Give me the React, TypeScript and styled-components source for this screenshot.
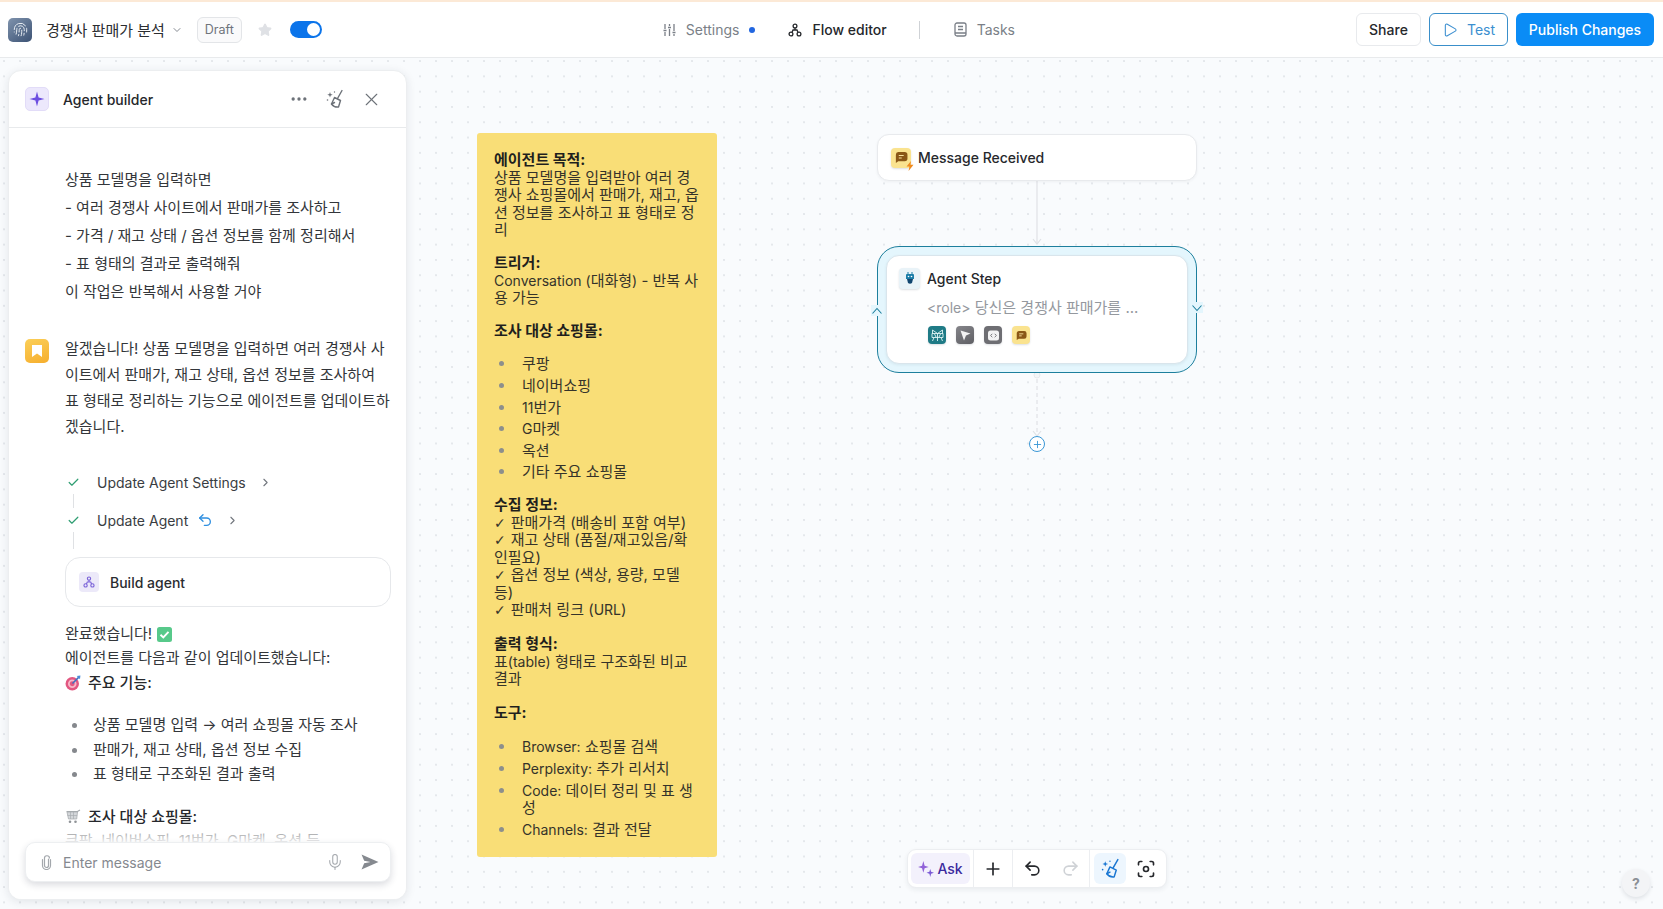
import React from 'react'
import styled, { createGlobalStyle } from 'styled-components'
import {
  ChevronDown,
  ChevronRight,
  Check,
  Ellipsis,
  Fingerprint,
  Focus,
  Mic,
  Play,
  Plus,
  Redo2,
  Star,
  Undo2,
  X,
} from 'lucide-react'

const GlobalStyle = createGlobalStyle`
  html, body {
    margin: 0;
    padding: 0;
    height: 100%;
    overflow: hidden;
    background: #fff;
  }
  body {
    font-family: Inter, 'Noto Sans CJK KR', 'Noto Sans', sans-serif;
    font-size: 15px;
    color: #26282c;
  }
  * { box-sizing: border-box; }
`

const Page = styled.div`
  width: 1663px;
  height: 909px;
  display: flex;
  flex-direction: column;
  overflow: hidden;
`

const Header = styled.header`
  height: 58px;
  flex: none;
  display: flex;
  align-items: center;
  justify-content: space-between;
  padding: 0 9px 0 8px;
  background: #fff;
  border-top: 2px solid #fce9d6;
  border-bottom: 1px solid #e8eaec;
`

const HeaderGroup = styled.div`
  display: flex;
  align-items: center;
`

const Logo = styled.div`
  width: 24px;
  height: 24px;
  border-radius: 5px;
  background: linear-gradient(140deg, #7f93ad, #3c5274);
  color: #e8edf3;
  display: flex;
  align-items: center;
  justify-content: center;
`

const AgentName = styled.span`
  margin-left: 14px;
  font-size: 15px;
  color: #2b2d31;
`

const NameCaret = styled.span`
  display: flex;
  margin: 0 14px 0 6px;
  color: #858a92;
`

const DraftBadge = styled.span`
  width: 45px;
  height: 26px;
  display: flex;
  align-items: center;
  justify-content: center;
  border: 1px solid #e3e5e8;
  border-radius: 6px;
  background: #fafafb;
  font-size: 12.5px;
  color: #6f747c;
`

const StarButton = styled.span`
  display: flex;
  margin: 0 18px 0 16px;
  color: #dfe1e5;
`

const Toggle = styled.span`
  width: 32px;
  height: 17px;
  border-radius: 9px;
  background: #0b74ea;
  display: flex;
  align-items: center;
  justify-content: flex-end;
  padding-right: 2px;

  &::after {
    content: '';
    width: 13px;
    height: 13px;
    border-radius: 50%;
    background: #fff;
  }
`

const NavItem = styled.span<{ $active?: boolean }>`
  display: flex;
  align-items: center;
  gap: 10px;
  font-size: 14px;
  font-weight: ${(p) => (p.$active ? 500 : 400)};
  color: ${(p) => (p.$active ? '#25272b' : '#7a7f87')};
`

const NavDot = styled.span`
  width: 6px;
  height: 6px;
  border-radius: 50%;
  background: #2166e0;
  margin: 0 33px 0 10px;
`

const NavDivider = styled.span`
  width: 1px;
  height: 18px;
  background: #cfd2d6;
  margin: 0 34px 0 32px;
`

const ShareButton = styled.button`
  width: 65px;
  height: 33px;
  border: 1px solid #e8eaed;
  border-radius: 6px;
  background: #fff;
  font: 500 14px Inter, sans-serif;
  color: #26282c;
`

const TestButton = styled.button`
  width: 79px;
  height: 33px;
  margin: 0 8px;
  border: 1px solid #3a8fca;
  border-radius: 6px;
  background: #fff;
  font: 400 14px Inter, sans-serif;
  color: #3c8fd0;
  display: flex;
  align-items: center;
  justify-content: center;
  gap: 9px;
`

const PublishButton = styled.button`
  width: 138px;
  height: 33px;
  border: none;
  border-radius: 6px;
  background: #0a8cf6;
  font: 500 14px Inter, sans-serif;
  color: #fff;
`

const Canvas = styled.main`
  position: relative;
  flex: 1;
  min-height: 0;
  padding: 12px 0 9px 8px;
  background-color: #f9fbfd;
  background-image: radial-gradient(circle, #d3d7dd 0.6px, transparent 0.8px);
  background-size: 16px 15.3px;
  background-position: 12px -4.6px;
`

const Panel = styled.aside`
  position: relative;
  width: 399px;
  height: 100%;
  display: flex;
  flex-direction: column;
  background: #fff;
  border: 1px solid #eceef0;
  border-radius: 13px;
  box-shadow: 0 2px 10px rgba(30, 40, 60, 0.1);
  overflow: hidden;
`

const PanelHeader = styled.div`
  height: 57px;
  flex: none;
  display: flex;
  align-items: center;
  padding: 0 24px 0 16px;
  border-bottom: 1px solid #e8eaec;
`

const SparkTile = styled.span`
  width: 24px;
  height: 24px;
  border-radius: 5px;
  background: #ece8fc;
  border: 1px solid #e2dcf8;
  display: flex;
  align-items: center;
  justify-content: center;
`

const PanelTitle = styled.span`
  margin-left: 14px;
  flex: 1;
  font-size: 14px;
  font-weight: 500;
  color: #25272b;
`

const PanelActions = styled.div`
  display: flex;
  align-items: center;
  gap: 16px;
  color: #6d7279;
`

const PanelBody = styled.div`
  flex: 1;
  min-height: 0;
  overflow: hidden;
  padding: 38px 15px 0 16px;
`

const UserMessage = styled.div`
  margin-left: 40px;
  font-size: 15px;
  line-height: 28px;
  color: #33363a;
`

const AssistantRow = styled.div`
  display: flex;
  gap: 16px;
  margin-top: 30px;
`

const Avatar = styled.span`
  width: 24px;
  height: 24px;
  flex: none;
  margin-top: 3px;
  border-radius: 5px;
  background: linear-gradient(160deg, #fbcf59, #f6ae2d);
  display: flex;
  align-items: center;
  justify-content: center;
`

const AssistantText = styled.div`
  flex: 1;
  font-size: 15px;
  line-height: 26px;
  color: #33363a;
`

const Steps = styled.div`
  margin: 30px 0 0 40px;
`

const StepRow = styled.div`
  height: 24px;
  display: flex;
  align-items: center;
  font-size: 14px;
  color: #3a3d42;
`

const StepCheck = styled.span`
  width: 32px;
  display: flex;
  padding-left: 2px;
  color: #2f9e72;
`

const StepLabel = styled.span`
  margin-right: 9px;
`

const StepChevron = styled.span`
  display: flex;
  margin-left: 13px;
  color: #72777e;
`

const StepLine = styled.span<{ $height: number }>`
  display: block;
  width: 1px;
  height: ${(p) => p.$height}px;
  margin-left: 8px;
  background: #dfe1e4;
`

const BuildCard = styled.div`
  height: 50px;
  margin: 8px 0 0 40px;
  display: flex;
  align-items: center;
  gap: 11px;
  padding-left: 13px;
  border: 1px solid #e6e8eb;
  border-radius: 15px;
  background: #fff;
  font-size: 14px;
  font-weight: 500;
  color: #2a2c30;
`

const BuildTile = styled.span`
  width: 20px;
  height: 20px;
  border-radius: 4px;
  background: #ece9f9;
  display: flex;
  align-items: center;
  justify-content: center;
`

const Summary = styled.div`
  margin: 15px 0 0 40px;
  font-size: 15px;
  line-height: 24px;
  color: #33363a;
`

const SummaryHeading = styled.div`
  display: flex;
  align-items: center;
  gap: 7px;
  font-weight: 500;
  color: #26282c;
`

const FirstHeading = styled(SummaryHeading)`
  margin-top: 1px;
`

const InlineEmoji = styled.span`
  display: inline-flex;
  vertical-align: -3px;
  margin-left: 5px;
`

const SummaryList = styled.ul`
  margin: 18px 0 18px;
  padding: 0;
  list-style: none;
`

const SummaryItem = styled.li`
  position: relative;
  padding-left: 28px;
  line-height: 24.5px;

  &::before {
    content: '';
    position: absolute;
    left: 7px;
    top: 10px;
    width: 5px;
    height: 5px;
    border-radius: 50%;
    background: #85888d;
  }
`

const InputDock = styled.div`
  position: absolute;
  left: 0;
  right: 0;
  bottom: 0;
  padding: 12px 15px 17px 16px;
  background: linear-gradient(to bottom, rgba(255, 255, 255, 0.45), #fff 14px);
`

const InputBox = styled.div`
  height: 40px;
  display: flex;
  align-items: center;
  padding: 0 11px 0 15px;
  background: #fff;
  border: 1px solid #edeff1;
  border-radius: 10px;
  box-shadow: 0 3px 7px rgba(30, 40, 60, 0.16);
  color: #a3a7ac;
`

const Placeholder = styled.span`
  flex: 1;
  margin-left: 11px;
  font-size: 14px;
  color: #85898f;
`

const SendIcon = styled.svg`
  margin-left: 17px;
`

const Note = styled.section`
  position: absolute;
  left: 477px;
  top: 75px;
  width: 240px;
  padding: 18px 17px 4px 17px;
  border-radius: 3px;
  background: #f9de77;
  font-size: 15px;
  line-height: 17.6px;
  color: #35332a;
`

const NoteBlock = styled.div<{ $gap?: number }>`
  margin-bottom: ${(p) => p.$gap ?? 15}px;
`

const NoteHeading = styled.div`
  font-weight: 700;
  color: #1f1f1d;
`

const NoteList = styled.ul<{ $top?: number }>`
  margin: ${(p) => p.$top ?? 16}px 0 15px;
  padding: 0;
  list-style: none;
`

const NoteItem = styled.li`
  position: relative;
  padding-left: 28px;
  margin-bottom: 4px;

  &::before {
    content: '';
    position: absolute;
    left: 5px;
    top: 6px;
    width: 5px;
    height: 5px;
    border-radius: 50%;
    background: #8d8f8c;
  }
`

const Latin = styled.span`
  font-size: 14px;
  line-height: 1;
`

const Tick = styled.span`
  font-family: 'DejaVu Sans', sans-serif;
  font-size: 14px;
  line-height: 1;
  margin-right: 5px;
`

const MessageNode = styled.div`
  position: absolute;
  left: 877px;
  top: 76px;
  width: 320px;
  height: 47px;
  display: flex;
  align-items: center;
  gap: 7px;
  padding-left: 13px;
  background: #fff;
  border: 1px solid #e8eaed;
  border-radius: 12px;
  box-shadow: 0 1px 3px rgba(30, 40, 60, 0.05);
  font-size: 14px;
  font-weight: 500;
  color: #26282c;
`

const AgentFrame = styled.div`
  position: absolute;
  left: 877px;
  top: 188px;
  width: 320px;
  height: 127px;
  padding: 8px;
  background: #e4f6fd;
  border: 1px solid #1d7f9d;
  border-radius: 22px;
`

const AgentCard = styled.div`
  height: 100%;
  padding: 12px 12px;
  background: #fff;
  border: 1px solid #d9e5ec;
  border-radius: 13px;
  box-shadow: 0 1px 3px rgba(30, 60, 80, 0.08);
`

const AgentTitle = styled.div`
  display: flex;
  align-items: center;
  gap: 7px;
  font-size: 14px;
  font-weight: 500;
  color: #26282c;
`

const AgentPrompt = styled.div`
  margin: 8px 0 0 28px;
  font-size: 15px;
  line-height: 22px;
  color: #94989e;
`

const ToolRow = styled.div`
  display: flex;
  gap: 10px;
  margin: 7px 0 0 29px;
`

const Tile = styled.span<{ $bg: string; $size?: number }>`
  width: ${(p) => p.$size ?? 18}px;
  height: ${(p) => p.$size ?? 18}px;
  flex: none;
  border-radius: 4px;
  background: ${(p) => p.$bg};
  display: flex;
  align-items: center;
  justify-content: center;
  box-shadow: 0 1px 2px rgba(30, 40, 60, 0.15);
`

const BadgeTile = styled(Tile)`
  position: relative;
`

const BoltBadge = styled.svg`
  position: absolute;
  right: -3px;
  bottom: -3px;
`

const LoopArrow = styled.span<{ $side: 'left' | 'right'; $top: number }>`
  position: absolute;
  top: ${(p) => p.$top}px;
  ${(p) => p.$side}: -7px;
  width: 12px;
  height: 11px;
  display: flex;
  align-items: center;
  justify-content: center;
  color: #1d7f9d;
  background: #e4f6fd;
`

const Wires = styled.svg`
  position: absolute;
  left: 1027px;
  top: 123px;
`

const AddStep = styled.span`
  position: absolute;
  left: 1029px;
  top: 378px;
  width: 16px;
  height: 16px;
  border: 1px solid #3a97d6;
  border-radius: 50%;
  background: #fff;
  display: flex;
  align-items: center;
  justify-content: center;
  color: #3a97d6;
`

const Toolbar = styled.div`
  position: absolute;
  left: 907px;
  top: 791px;
  width: 260px;
  height: 39px;
  display: flex;
  align-items: stretch;
  padding: 0 3px;
  background: #fff;
  border: 1px solid #eceef1;
  border-radius: 9px;
  box-shadow: 0 2px 5px rgba(30, 40, 60, 0.07);
`

const AskButton = styled.span`
  flex: none;
  width: 59px;
  margin: 3px 3px 3px 0;
  display: flex;
  align-items: center;
  justify-content: center;
  gap: 3px;
  border-radius: 6px;
  background: #f3f1fc;
  font-size: 14px;
  font-weight: 500;
  color: #3b2a9e;
`

const ToolDivider = styled.span`
  flex: none;
  width: 1px;
  background: #eceef1;
`

const ToolButton = styled.span<{ $selected?: boolean; $color?: string }>`
  flex: none;
  width: ${(p) => (p.$selected ? 32 : 38)}px;
  margin: ${(p) => (p.$selected ? '3px 1px 3px 4px' : '3px 0')};
  display: flex;
  align-items: center;
  justify-content: center;
  border-radius: 6px;
  background: ${(p) => (p.$selected ? '#edf6fe' : 'transparent')};
  color: ${(p) => p.$color ?? '#26282c'};
`

const HelpButton = styled.span`
  position: absolute;
  right: 13px;
  bottom: 12px;
  width: 28px;
  height: 28px;
  border-radius: 50%;
  background: #f3f4f6;
  box-shadow: 0 2px 4px rgba(30, 40, 60, 0.12);
  display: flex;
  align-items: center;
  justify-content: center;
  font-size: 14px;
  font-weight: 700;
  color: #8b8f95;
`

function Sparkle({ size = 16, color = '#6d4fe0' }: { size?: number; color?: string }) {
  return (
    <svg width={size} height={size} viewBox="0 0 16 16">
      <path d="M8 0.5 L9.6 6.4 L15.5 8 L9.6 9.6 L8 15.5 L6.4 9.6 L0.5 8 L6.4 6.4 Z" fill={color} />
    </svg>
  )
}

function FlowGlyph({ size = 14, color = '#26282c' }: { size?: number; color?: string }) {
  return (
    <svg width={size} height={size} viewBox="0 0 14 14" fill="none" stroke={color} strokeWidth="1.3">
      <circle cx="7" cy="3" r="1.9" />
      <circle cx="3" cy="11" r="1.9" />
      <circle cx="11" cy="11" r="1.9" />
      <path d="M7 5 V7 M4 9.4 L5 7 H9 L10 9.4" />
    </svg>
  )
}

function MixerGlyph() {
  return (
    <svg width="13" height="14" viewBox="0 0 13 14" fill="none" stroke="#7a7f87" strokeWidth="1.3">
      <path d="M2 1 V6 M2 9 V13 M6.5 1 V3 M6.5 6 V13 M11 1 V8 M11 11 V13" />
      <path d="M0.5 7.5 H3.5 M5 4.5 H8 M9.5 9.5 H12.5" />
    </svg>
  )
}

function BookGlyph() {
  return (
    <svg width="13" height="15" viewBox="0 0 13 15" fill="none" stroke="#7a7f87" strokeWidth="1.3">
      <rect x="1" y="1" width="11" height="13" rx="2" />
      <path d="M4 4.5 H9 M4 7.5 H9 M1 11 H12" />
    </svg>
  )
}

function BroomGlyph({ color, size = 18 }: { color: string; size?: number }) {
  return (
    <svg width={size} height={size} viewBox="0 0 20 20" fill="none" stroke={color} strokeWidth="1.4" strokeLinejoin="round" strokeLinecap="round">
      <path d="M17 1.5 L12.5 9.5" />
      <path d="M9.5 8.5 L15.5 11.5 L13.5 18 Q9 18.5 6.5 15 Z" />
      <path d="M6.5 15 L9.5 13.5" />
      <path d="M5 3 L5.7 5 L7.7 5.7 L5.7 6.4 L5 8.4 L4.3 6.4 L2.3 5.7 L4.3 5 Z" fill={color} stroke="none" />
      <circle cx="2.5" cy="11" r="0.8" fill={color} stroke="none" />
      <circle cx="9.5" cy="3" r="0.7" fill={color} stroke="none" />
    </svg>
  )
}

function ClipGlyph() {
  return (
    <svg width="11" height="15" viewBox="0 0 11 15" fill="none" stroke="currentColor" strokeWidth="1.2" strokeLinecap="round">
      <path d="M7.5 4 V10.5 A2 2 0 0 1 3.5 10.5 V3.5 A2.5 2.5 0 0 1 8.5 3 M1.5 4.5 V10.5 A4 4 0 0 0 9.5 10.5 V4.5" />
    </svg>
  )
}

function ChatGlyph({ size = 12 }: { size?: number }) {
  return (
    <svg width={size} height={size} viewBox="0 0 12 12">
      <path d="M3 1 H9 A2.5 2.5 0 0 1 11.5 3.5 V7 A2.5 2.5 0 0 1 9 9.5 H3 L0.8 11 V3.5 A2.5 2.5 0 0 1 3 1 Z" fill="#8a5716" />
      <path d="M3.5 4.2 H8 M3.5 6.4 H6.2" stroke="#f8e2a0" strokeWidth="1" />
    </svg>
  )
}

function CheckEmoji() {
  return (
    <svg width="15" height="15" viewBox="0 0 15 15">
      <rect width="15" height="15" rx="2.5" fill="#57c98a" />
      <path d="M3.5 7.8 L6.3 10.5 L11.5 4.8" fill="none" stroke="#fff" strokeWidth="1.9" />
    </svg>
  )
}

function TargetEmoji() {
  return (
    <svg width="16" height="16" viewBox="0 0 15 15">
      <circle cx="6.8" cy="8.2" r="6.3" fill="#e25781" />
      <circle cx="6.8" cy="8.2" r="4" fill="#f7b7c8" />
      <circle cx="6.8" cy="8.2" r="2.3" fill="#e25781" />
      <path d="M7 8 L13 2" stroke="#3f6fc0" strokeWidth="1.4" />
      <path d="M11 1 L14.5 0.5 L14 4 Z" fill="#4b8ed8" />
    </svg>
  )
}

function CartEmoji() {
  return (
    <svg width="16" height="15" viewBox="0 0 15 15" fill="none">
      <path d="M1 2.5 H12 L14.5 1" stroke="#a5a9ad" strokeWidth="1.2" />
      <path d="M1.5 3 H12 L11.2 10 H3 Z" fill="#d4d7da" stroke="#a9adb1" strokeWidth="0.8" />
      <path d="M5 3 V10 M8 3 V10 M2 6.5 H11.6" stroke="#a9adb1" strokeWidth="0.7" />
      <circle cx="4.5" cy="12.8" r="1.3" fill="#8f9397" />
      <circle cx="10" cy="12.8" r="1.3" fill="#8f9397" />
    </svg>
  )
}

function ChatNodeIcon() {
  return (
    <BadgeTile $bg="#fae38f" $size={20}>
      <ChatGlyph size={13} />
      <BoltBadge width="8" height="10" viewBox="0 0 8 10">
        <path d="M5 0 L0.5 5.6 H3.4 L2.6 10 L7.5 3.8 H4.4 Z" fill="#f08a1d" />
      </BoltBadge>
    </BadgeTile>
  )
}

function RobotGlyph() {
  return (
    <svg width="12" height="13" viewBox="0 0 12 13">
      <path d="M3 2 H9 A1 1 0 0 1 10 3 V7 H2 V3 A1 1 0 0 1 3 2 Z" fill="#1b7da8" />
      <path d="M3 7 H9 L8 11 Q6 12.5 4 11 Z" fill="#10456f" />
      <circle cx="4.5" cy="4.5" r="0.8" fill="#fff" />
      <circle cx="7.5" cy="4.5" r="0.8" fill="#fff" />
      <path d="M4 0 V2 M8 0 V2" stroke="#1b7da8" />
    </svg>
  )
}

function ResearchGlyph() {
  return (
    <svg width="13" height="13" viewBox="0 0 13 13" fill="none" stroke="#dff4f4" strokeWidth="0.9">
      <path d="M1.5 1 L6.5 4.5 L11.5 1 V5 M1.5 1 V5 M1 4.5 H12 V8.5 H1 Z" />
      <path d="M6.5 4.5 V12 M3 8.5 L1.5 12 M10 8.5 L11.5 12 M3.5 5 L5 8 M9.5 5 L8 8" />
    </svg>
  )
}

function PointerGlyph() {
  return (
    <svg width="13" height="13" viewBox="0 0 13 13">
      <path d="M1.5 1.5 L11.5 4.5 L7 6.5 L5 11.5 Z" fill="#f3f3f4" />
    </svg>
  )
}

function CodeGlyph() {
  return (
    <svg width="13" height="13" viewBox="0 0 13 13">
      <rect x="1" y="1.5" width="11" height="10" rx="2.5" fill="#f3f3f4" />
      <path d="M5.3 4.8 L3.6 6.5 L5.3 8.2 M7.7 4.8 L9.4 6.5 L7.7 8.2" fill="none" stroke="#6a6a6e" strokeWidth="0.9" />
    </svg>
  )
}

export default function App() {
  return (
    <Page>
      <GlobalStyle />
      <Header>
        <HeaderGroup>
          <Logo>
            <Fingerprint size={15} strokeWidth={1.6} />
          </Logo>
          <AgentName>경쟁사 판매가 분석</AgentName>
          <NameCaret>
            <ChevronDown size={12} />
          </NameCaret>
          <DraftBadge>Draft</DraftBadge>
          <StarButton>
            <Star size={14} fill="currentColor" />
          </StarButton>
          <Toggle />
        </HeaderGroup>
        <HeaderGroup>
          <NavItem>
            <MixerGlyph />
            Settings
          </NavItem>
          <NavDot />
          <NavItem $active>
            <FlowGlyph />
            Flow editor
          </NavItem>
          <NavDivider />
          <NavItem>
            <BookGlyph />
            Tasks
          </NavItem>
        </HeaderGroup>
        <HeaderGroup>
          <ShareButton>Share</ShareButton>
          <TestButton>
            <Play size={16} strokeWidth={1.6} />
            Test
          </TestButton>
          <PublishButton>Publish Changes</PublishButton>
        </HeaderGroup>
      </Header>

      <Canvas>
        <Panel>
          <PanelHeader>
            <SparkTile>
              <Sparkle />
            </SparkTile>
            <PanelTitle>Agent builder</PanelTitle>
            <PanelActions>
              <Ellipsis size={20} />
              <BroomGlyph color="#6d7279" size={20} />
              <X size={21} strokeWidth={1.3} />
            </PanelActions>
          </PanelHeader>
          <PanelBody>
            <UserMessage>
              상품 모델명을 입력하면
              <br />- 여러 경쟁사 사이트에서 판매가를 조사하고
              <br />- 가격 / 재고 상태 / 옵션 정보를 함께 정리해서
              <br />- 표 형태의 결과로 출력해줘
              <br />이 작업은 반복해서 사용할 거야
            </UserMessage>
            <AssistantRow>
              <Avatar>
                <svg width="12" height="14" viewBox="0 0 12 14">
                  <path d="M1 1 H11 V13 L6 9.6 L1 13 Z" fill="#fff" />
                </svg>
              </Avatar>
              <AssistantText>
                알겠습니다! 상품 모델명을 입력하면 여러 경쟁사 사이트에서 판매가, 재고 상태, 옵션 정보를 조사하여
                표 형태로 정리하는 기능으로 에이전트를 업데이트하겠습니다.
              </AssistantText>
            </AssistantRow>
            <Steps>
              <StepRow>
                <StepCheck>
                  <Check size={13} strokeWidth={2.2} />
                </StepCheck>
                Update Agent Settings
                <StepChevron>
                  <ChevronRight size={13} />
                </StepChevron>
              </StepRow>
              <StepLine $height={14} />
              <StepRow>
                <StepCheck>
                  <Check size={13} strokeWidth={2.2} />
                </StepCheck>
                <StepLabel>Update Agent</StepLabel>
                <Undo2 size={16} color="#2f8fe0" />
                <StepChevron>
                  <ChevronRight size={13} />
                </StepChevron>
              </StepRow>
              <StepLine $height={17} />
            </Steps>
            <BuildCard>
              <BuildTile>
                <FlowGlyph size={12} color="#7a62d8" />
              </BuildTile>
              Build agent
            </BuildCard>
            <Summary>
              <div>
                완료했습니다!
                <InlineEmoji>
                  <CheckEmoji />
                </InlineEmoji>
              </div>
              <div>에이전트를 다음과 같이 업데이트했습니다:</div>
              <FirstHeading>
                <TargetEmoji />
                주요 기능:
              </FirstHeading>
              <SummaryList>
                <SummaryItem>상품 모델명 입력 → 여러 쇼핑몰 자동 조사</SummaryItem>
                <SummaryItem>판매가, 재고 상태, 옵션 정보 수집</SummaryItem>
                <SummaryItem>표 형태로 구조화된 결과 출력</SummaryItem>
              </SummaryList>
              <SummaryHeading>
                <CartEmoji />
                조사 대상 쇼핑몰:
              </SummaryHeading>
              <div>쿠팡, 네이버쇼핑, 11번가, G마켓, 옥션 등</div>
            </Summary>
          </PanelBody>
          <InputDock>
            <InputBox>
              <ClipGlyph />
              <Placeholder>Enter message</Placeholder>
              <Mic size={18} strokeWidth={1.4} />
              <SendIcon width="18" height="16" viewBox="0 0 17 15">
                <path d="M0.5 0.5 L16.5 7.5 L0.5 14.5 L3 8.6 L9 7.5 L3 6.4 Z" fill="#85898f" />
              </SendIcon>
            </InputBox>
          </InputDock>
        </Panel>

        <Note>
          <NoteBlock>
            <NoteHeading>에이전트 목적:</NoteHeading>
            상품 모델명을 입력받아 여러 경쟁사 쇼핑몰에서 판매가, 재고, 옵션 정보를 조사하고 표 형태로 정리
          </NoteBlock>
          <NoteBlock>
            <NoteHeading>트리거:</NoteHeading>
            <Latin>Conversation (</Latin>대화형<Latin>)</Latin> - 반복 사용 가능
          </NoteBlock>
          <NoteHeading>조사 대상 쇼핑몰:</NoteHeading>
          <NoteList>
            <NoteItem>쿠팡</NoteItem>
            <NoteItem>네이버쇼핑</NoteItem>
            <NoteItem>
              <Latin>11</Latin>번가
            </NoteItem>
            <NoteItem>
              <Latin>G</Latin>마켓
            </NoteItem>
            <NoteItem>옥션</NoteItem>
            <NoteItem>기타 주요 쇼핑몰</NoteItem>
          </NoteList>
          <NoteBlock $gap={16}>
            <NoteHeading>수집 정보:</NoteHeading>
            <Tick>✓</Tick>판매가격 (배송비 포함 여부)
            <br />
            <Tick>✓</Tick>재고 상태 (품절/재고있음/확인필요)
            <br />
            <Tick>✓</Tick>옵션 정보 (색상, 용량, 모델 등)
            <br />
            <Tick>✓</Tick>판매처 링크 (<Latin>URL</Latin>)
          </NoteBlock>
          <NoteBlock $gap={16}>
            <NoteHeading>출력 형식:</NoteHeading>
            표<Latin>(table)</Latin> 형태로 구조화된 비교 결과
          </NoteBlock>
          <NoteHeading>도구:</NoteHeading>
          <NoteList $top={17}>
            <NoteItem>
              <Latin>Browser:</Latin> 쇼핑몰 검색
            </NoteItem>
            <NoteItem>
              <Latin>Perplexity:</Latin> 추가 리서치
            </NoteItem>
            <NoteItem>
              <Latin>Code:</Latin> 데이터 정리 및 표 생성
            </NoteItem>
            <NoteItem>
              <Latin>Channels:</Latin> 결과 전달
            </NoteItem>
          </NoteList>
        </Note>

        <Wires width="20" height="260" viewBox="0 0 20 260" fill="none">
          <path d="M10 0 V62" stroke="#dfe2e6" strokeWidth="1.2" />
          <path d="M6 58 L10 63 L14 58" stroke="#dfe2e6" strokeWidth="1.2" />
          <circle cx="10" cy="194" r="3" fill="#f3f6f8" stroke="#e7eaed" />
          <path d="M10 198 V254" stroke="#dfe2e6" strokeWidth="1.2" strokeDasharray="4 3" />
          <path d="M6 250 L10 255 L14 250" stroke="#dfe2e6" strokeWidth="1.2" />
        </Wires>

        <MessageNode>
          <ChatNodeIcon />
          Message Received
        </MessageNode>

        <AgentFrame>
          <AgentCard>
            <AgentTitle>
              <Tile $bg="#e9f3f8" $size={21}>
                <RobotGlyph />
              </Tile>
              Agent Step
            </AgentTitle>
            <AgentPrompt>
              <Latin>&lt;role&gt;</Latin> 당신은 경쟁사 판매가를 ...
            </AgentPrompt>
            <ToolRow>
              <Tile $bg="#1f7b86">
                <ResearchGlyph />
              </Tile>
              <Tile $bg="linear-gradient(150deg, #85858a, #5f5f64)">
                <PointerGlyph />
              </Tile>
              <Tile $bg="#6e6e73">
                <CodeGlyph />
              </Tile>
              <Tile $bg="#fae38f">
                <ChatGlyph size={11} />
              </Tile>
            </ToolRow>
          </AgentCard>
          <LoopArrow $side="left" $top={58}>
            <svg width="12" height="8" viewBox="0 0 12 8" fill="none" stroke="currentColor" strokeWidth="1.1">
              <path d="M1.5 6.5 L6 1.5 L10.5 6.5" />
            </svg>
          </LoopArrow>
          <LoopArrow $side="right" $top={55}>
            <svg width="12" height="8" viewBox="0 0 12 8" fill="none" stroke="currentColor" strokeWidth="1.1">
              <path d="M1.5 1.5 L6 6.5 L10.5 1.5" />
            </svg>
          </LoopArrow>
        </AgentFrame>

        <AddStep>
          <Plus size={11} />
        </AddStep>

        <Toolbar>
          <AskButton>
            <svg width="16" height="17" viewBox="0 0 15 16">
              <path d="M5 1 L6.2 5.3 L10 6.5 L6.2 7.7 L5 12 L3.8 7.7 L0 6.5 L3.8 5.3 Z" fill="#9162d8" />
              <path d="M11.5 8.5 L12.3 11 L15 12 L12.3 13 L11.5 16 L10.7 13 L8 12 L10.7 11 Z" fill="#7a5ad6" />
            </svg>
            Ask
          </AskButton>
          <ToolDivider />
          <ToolButton>
            <Plus size={20} />
          </ToolButton>
          <ToolDivider />
          <ToolButton>
            <Undo2 size={19} />
          </ToolButton>
          <ToolButton $color="#cfd2d6">
            <Redo2 size={19} />
          </ToolButton>
          <ToolDivider />
          <ToolButton $selected>
            <BroomGlyph color="#1976d2" size={21} />
          </ToolButton>
          <ToolButton>
            <Focus size={20} />
          </ToolButton>
        </Toolbar>

        <HelpButton>?</HelpButton>
      </Canvas>
    </Page>
  )
}
